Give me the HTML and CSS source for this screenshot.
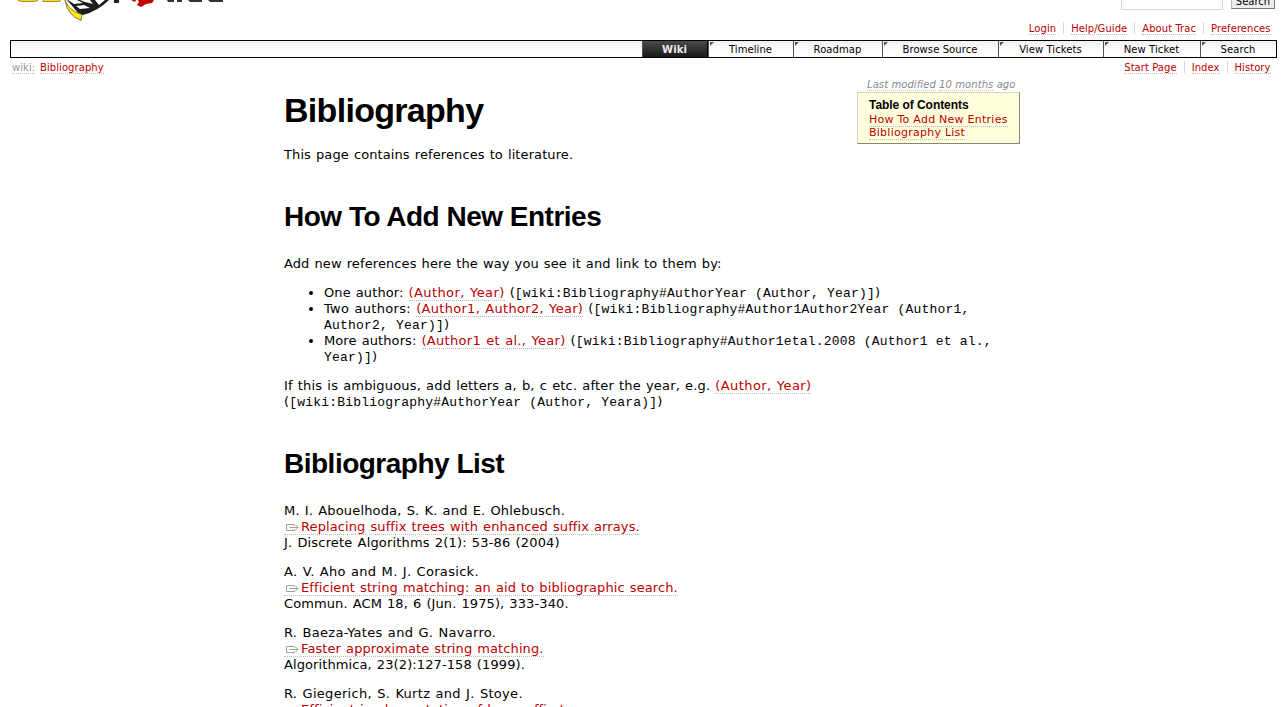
FILE: index.html
```html
<!DOCTYPE html>
<html lang="en">
<head>
<meta charset="utf-8">
<title>Bibliography</title>
<link rel="stylesheet" href="styles.css">
</head>
<body>
<svg class="defs" width="0" height="0">
  <symbol id="ext" viewBox="0 0 13 9"><path d="M8.500 2.500V1.500H.5V7.500H8.500V6.500M3.500 4.500H12M9.500 2L12 4.500L9.500 7" fill="none" stroke="#99a58f"/></symbol>
</svg>
<header class="banner">
  <div class="logo">
    <svg width="230" height="24" viewBox="0 0 230 24">
      <path d="M17 -1Q18 1.500 24 1.500H33Q38 1.500 39 -1M43 -1V1.500H60V-1" fill="#fddc1a" stroke="#8a7a20" stroke-width=".8"/>
      <path d="M67 0L79 14L83 15Q98 11 109 0Z" fill="#1d1d1d"/>
      <path d="M68 0H77L83 3L74 4ZM80 0H90L93 4L85 2ZM76 6L84 5L90 8L80 9ZM95 0H105L99 5Z" fill="#fff"/>
      <path d="M65 0Q69 11 82 14.500L81 20.500Q67 15 65 0Z" fill="#ffe51f" stroke="#6b6220" stroke-width=".8"/>
      <path d="M114 0H119V3H114Z" fill="#222"/>
      <path d="M131 0H136L135 2ZM138 0H154L152 3L146 4L141 7L137 5L139 2Z" fill="#c40000"/>
      <path d="M167 0H174V2H168ZM177 0H182V2H177ZM188 0H202V2H190ZM208 0H223V2H210Z" fill="#333"/>
    </svg>
  </div>
  <form class="search"><span class="field"></span><span class="button">Search</span></form>
</header>
<nav class="metanav"><span><a>Login</a></span><span><a>Help/Guide</a></span><span><a>About Trac</a></span><span><a>Preferences</a></span></nav>
<nav class="mainnav">
  <a class="tab w1 active">Wiki</a><a class="tab w2">Timeline</a><a class="tab w3">Roadmap</a><a class="tab w4">Browse Source</a><a class="tab w5">View Tickets</a><a class="tab w6">New Ticket</a><a class="tab w7">Search</a>
</nav>
<div class="ctxrow">
  <div class="path"><a class="muted">wiki:</a> <a>Bibliography</a></div>
  <nav class="ctxnav"><span><a>Start Page</a></span><span><a>Index</a></span><span><a>History</a></span></nav>
</div>
<main class="content">
  <article class="wiki">
    <h1>Bibliography</h1>
    <p>This page contains references to literature.</p>
    <h2>How To Add New Entries</h2>
    <p>Add new references here the way you see it and link to them by:</p>
    <ul>
      <li>One author: <a class="ref">(Author, Year)</a> (<code>[wiki:Bibliography#AuthorYear (Author, Year)]</code>)</li>
      <li><span class="wide">Two authors: </span><a class="wide">(Author1, Author2, Year)</a> (<code>[wiki:Bibliography#Author1Author2Year (Author1,<br>Author2, Year)]</code>)</li>
      <li>More authors: <a class="wide">(Author1 et al., Year)</a> (<code>[wiki:Bibliography#Author1etal.2008 (Author1 et al.,<br>Year)]</code>)</li>
    </ul>
    <p><span class="semi">If this is ambiguous, add letters a, b, c etc. after the year, e.g. </span><a class="ref">(Author, Year)</a><br>(<code>[wiki:Bibliography#AuthorYear (Author, Yeara)]</code>)</p>
    <h2>Bibliography List</h2>
    <p><span class="semi">M. I. Abouelhoda, S. K. and E. Ohlebusch.</span><br><a class="ext"><svg><use href="#ext"/></svg>Replacing suffix trees with enhanced suffix arrays.</a><br><span class="semi">J. Discrete Algorithms 2(1): 53-86 (2004)</span></p>
    <p><span class="wide">A. V. Aho and M. J. Corasick.</span><br><a class="ext"><svg><use href="#ext"/></svg>Efficient string matching: an aid to bibliographic search.</a><br>Commun. ACM 18, 6 (Jun. 1975), 333-340.</p>
    <p><span class="wide">R. Baeza-Yates and G. Navarro.</span><br><a class="ext"><svg><use href="#ext"/></svg>Faster approximate string matching.</a><br>Algorithmica, 23(2):127-158 (1999).</p>
    <p><span class="wide">R. Giegerich, S. Kurtz and J. Stoye.</span><br><a class="ext"><svg><use href="#ext"/></svg>Efficient implementation of lazy suffix trees.</a></p>
  </article>
  <aside class="side">
    <div class="modified"><a>Last modified</a> <a>10 months</a> ago</div>
    <div class="toc">
      <h4>Table of Contents</h4>
      <a>How To Add New Entries</a><br><a>Bibliography List</a>
    </div>
  </aside>
</main>
</body>
</html>
```
FILE: styles.css
```css
html, body { height: 707px; overflow: hidden; }
body { margin: 0; padding: 0 10px; box-sizing: border-box; background: #fff; color: #000; font: 13px/16px "DejaVu Sans", Verdana, sans-serif; }
a { color: #b00; border-bottom: 1px dotted #bbb; }
.defs { position: absolute; }
.banner { display: flex; justify-content: space-between; height: 22px; }
.logo { margin-left: -10px; height: 22px; }
.logo svg { display: block; }
.search { display: flex; gap: 8px; margin-right: 2px; font-size: 10px; }
.field { width: 100px; height: 9px; border: 1px solid #d7d7d7; border-top: 0; }
.button { width: 42px; height: 8px; border: 1px solid; border-top: 0; border-color: #bbb #777 #777 #bbb; background: #eee; line-height: 3px; text-align: center; }
.metanav, .ctxnav { display: flex; justify-content: flex-end; font-size: 10px; line-height: 14px; letter-spacing: .06px; }
.metanav { height: 18px; }
.metanav span, .ctxnav span { height: 12px; padding: 0 7px; border-right: 1px solid #d7d7d7; }
.metanav span:last-child, .ctxnav span:last-child { border: 0; padding-right: 6.500px; }
.mainnav { display: flex; justify-content: flex-end; height: 16px; border: 1px solid #000; background: linear-gradient(#f0f0f0, #fff 70%); font-size: 10px; line-height: 17px; letter-spacing: .08px; }
.tab { box-sizing: border-box; position: relative; border: 0; border-left: 1px solid #555; padding-right: 1px; color: #000; text-align: center; }
.tab:not(.active)::before { content: ""; position: absolute; left: 1px; top: 1px; border-top: 4px solid #555; border-right: 4px solid transparent; }
.active { background: linear-gradient(#484c48, #171917); color: #eee; font-weight: bold; border-right: 1px solid #000; }
.w1 { width: 66px; } .w2 { width: 85px; } .w3 { width: 89px; } .w4 { width: 116px; } .w5 { width: 105px; } .w6 { width: 97px; } .w7 { width: 76px; }
.ctxrow { display: flex; justify-content: space-between; padding-top: 3px; height: 16px; font-size: 10px; line-height: 14px; }
.path { padding-left: 2px; word-spacing: 1.500px; letter-spacing: .07px; }
.muted { color: #999; }
.content { display: flex; width: 736px; margin-left: 274px; justify-content: space-between; }
.wiki { width: 0; flex: 1; white-space: nowrap; letter-spacing: .1px; word-spacing: .8px; }
h1, h2, h4 { font-family: "Liberation Sans", Arial, sans-serif; font-weight: bold; margin: 0; word-spacing: 0; }
h1 { font-size: 34px; line-height: 38px; padding-top: 14px; margin-bottom: 18px; letter-spacing: -.7px; }
h2 { font-size: 28px; line-height: 32px; margin: 38px 0 23px; letter-spacing: -.5px; }
p { margin: 13px 0; }
ul { margin: 13px 0; padding-left: 40px; }
code { font: 13px/15px "Liberation Mono", "Courier New", monospace; letter-spacing: .2px; word-spacing: 0; }
.semi { letter-spacing: .17px; }
.wide { letter-spacing: .3px; }
.ref { letter-spacing: .4px; }
.ext svg { width: 13px; height: 9px; margin: 0 2px 0 2px; vertical-align: -1px; }
.side { width: 163px; }
.modified { height: 15px; padding-left: 10px; font-size: 10px; line-height: 15px; font-style: italic; color: #888; white-space: nowrap; letter-spacing: .08px; }
.modified a { color: #888; }
.toc { box-sizing: border-box; height: 52px; border: 1px solid; border-color: #d7d7c0 #888870 #888870 #d7d7c0; background: #ffd; padding: 5px 0 0 11px; font-size: 11px; line-height: 13px; white-space: nowrap; letter-spacing: .25px; }
.toc h4 { font-size: 12px; line-height: 14px; margin-bottom: 1px; letter-spacing: -.05px; }
```
